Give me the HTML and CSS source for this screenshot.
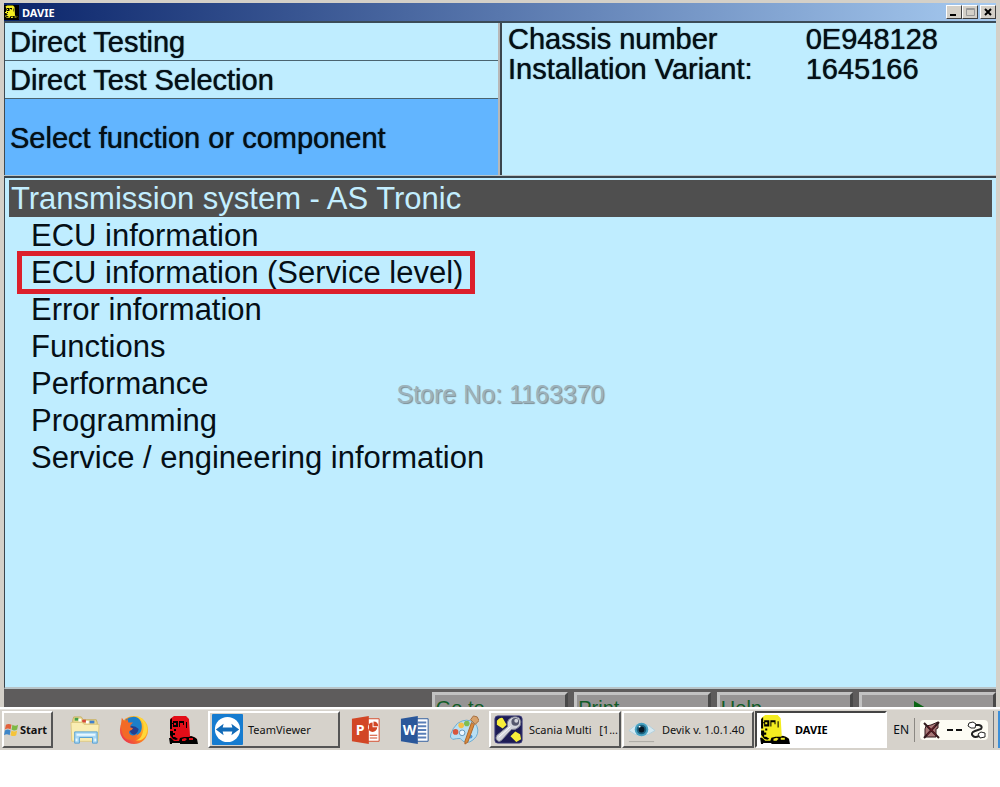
FILE: index.html
```html
<!DOCTYPE html>
<html lang="en">
<head>
    <meta charset="UTF-8">
    <meta name="viewport" content="width=device-width, initial-scale=1.0">
    <title>DAVIE</title>
    <link rel="stylesheet" href="styles.css">
</head>
<body>
    <!-- Truck icon, shared by the title bar and the taskbar -->
    <svg class="defs" aria-hidden="true">
        <symbol id="truck" viewBox="0 0 30 30">
            <path fill="currentColor" d="M2 4l4-3h12l3 3 1 17 6 2 1 5H3l-1-6z"/>
            <path fill="#000" d="M2 5l2-2v5h1V6h5v6H5V9H4v5H2zM11 6h5v4h-1V8h-3v4h-1zM18 7h1v6h-1zM2 16h3v2h2v2H5v2h2l3 2-2 1-3-1-3-4zM6 14h2v2H6zM1 23h2l3 3h5l1-3 4-1h5l2-1 3 1 3 2 1 5H12v-1H4v1H2z"/>
            <path fill="currentColor" d="M6 8h2v2H6zM14 24l3-1 2 1-2 2h-3zM21 23h4v2h-4z"/>
        </symbol>
    </svg>

    <main class="window">
        <header class="title-bar">
            <svg class="title-icon"><use href="#truck"/></svg>
            <h1>DAVIE</h1>
            <div class="window-buttons">
                <button aria-label="Minimize"><svg viewBox="0 0 12 10"><path d="M2 7h6v2H2z"/></svg></button>
                <button aria-label="Maximize" disabled><svg viewBox="0 0 12 10"><path fill="none" stroke="#999" d="M2.500 1.500h8v7h-8zM2 2.500h9"/></svg></button>
                <button class="close" aria-label="Close"><svg viewBox="0 0 12 10"><path fill="none" stroke="#000" stroke-width="2" d="M3 2l6 6M9 2L3 8"/></svg></button>
            </div>
        </header>

        <section class="info">
            <div class="steps">
                <p>Direct Testing</p>
                <p>Direct Test Selection</p>
                <p class="current">Select function or component</p>
            </div>
            <dl class="vehicle">
                <dt>Chassis number</dt>
                <dd>0E948128</dd>
                <dt>Installation Variant:</dt>
                <dd>1645166</dd>
            </dl>
        </section>

        <section class="selection">
            <h2>Transmission system - AS Tronic</h2>
            <ul>
                <li><a href="#">ECU information</a></li>
                <li><a href="#" class="marked">ECU information (Service level)</a></li>
                <li><a href="#">Error information</a></li>
                <li><a href="#">Functions</a></li>
                <li><a href="#">Performance</a></li>
                <li><a href="#">Programming</a></li>
                <li><a href="#">Service / engineering information</a></li>
            </ul>
            <p class="watermark">Store No: 1163370</p>
        </section>

        <div class="function-keys">
            <button class="first">Go to</button>
            <button>Print</button>
            <button>Help</button>
            <button class="next" aria-label="Next"><svg viewBox="0 0 14 16"><path fill="#0a6414" d="M1 1l12 7-12 7z"/></svg></button>
        </div>
    </main>

    <footer class="taskbar">
        <button class="start">
            <svg viewBox="0 0 16 16">
                <path fill="#e2603a" d="M2 3q3-2 6 0L7 8Q4 6 1 8z"/>
                <path fill="#7db844" d="M9 3q3 2 6 0l-1 5q-3 2-6 0z"/>
                <path fill="#3f86c8" d="M1 9q3-2 6 0l-1 5q-3-2-6 0z"/>
                <path fill="#f5c43a" d="M8 9q3 2 6 0l-1 5q-3 2-6 0z"/>
            </svg>
            Start
        </button>
        <div class="launchers">
            <button aria-label="Explorer">
                <svg viewBox="0 0 32 32">
                    <path fill="#e9d78b" stroke="#c9b265" d="M3 5l1-3h8l2 3h14l1 3v19H2z"/>
                    <path fill="#46a04a" d="M5 3h4v3H5z"/><path fill="#d64a3a" d="M13 5h4v3h-4z"/><path fill="#3f80cd" d="M21 6h5v3h-5z"/>
                    <path fill="#fff" d="M9 4h3v3H9zM17 6h3v3h-3z"/>
                    <path fill="#faedb2" stroke="#dec982" d="M1 8h12l2 2h16l-1 18H2z"/>
                    <path fill="#a9d8f4" stroke="#559fd2" d="M5 30V18h24v12h-5v-6H10v6z"/>
                    <path fill="none" stroke="#e8f8ff" stroke-width="2" d="M7 21h20M7 25v3M27 25v3"/>
                </svg>
            </button>
            <button aria-label="Firefox">
                <svg viewBox="0 0 32 32">
                    <defs>
                        <linearGradient id="flame" x1="1" y1="0" x2="0" y2="1"><stop offset="0" stop-color="#ffe63b"/><stop offset=".5" stop-color="#ff8a1c"/><stop offset="1" stop-color="#e3195b"/></linearGradient>
                    </defs>
                    <circle cx="16" cy="16" r="15" fill="url(#flame)"/>
                    <path fill="#1c7fc9" d="M7 5q5-4 11-3 5 2 6 7 1 6-1 9-4 5-9 4-5-2-5-7z"/>
                    <path fill="#253f8e" d="M12 12q5-1 9 3-1 5-5 6-6-1-4-9z"/>
                    <path fill="#f26a26" d="M2 11l1-8 3 4q2-1 3-3l1 4 5 0q-3 2-3 5l3 1q-1 2-4 3-1 4 3 5 3 0 5-2 1 4-4 6-8 2-11-5z"/>
                    <path fill="#ffd83a" d="M18 1q6 3 8 8 1 7-2 13-2 4-6 5 8 1 11-6 3-7-2-14-3-5-9-6z"/>
                </svg>
            </button>
            <button class="truck-red" aria-label="Truck tool"><svg><use href="#truck"/></svg></button>
        </div>
        <button class="task">
            <svg viewBox="0 0 32 32">
                <rect x="0" y="0" width="32" height="32" rx="1" fill="#167cd0"/>
                <circle cx="16" cy="16" r="13" fill="#fff"/>
                <path fill="#126bb8" d="M4 16l8-6-1 4h10l-1-4 8 6-8 6 1-4H11l1 4z"/>
            </svg>
            <span>TeamViewer</span>
        </button>
        <div class="launchers office">
            <button aria-label="PowerPoint">
                <svg viewBox="0 0 32 32">
                    <path fill="#fff" stroke="#d24625" stroke-width="1" d="M16 4h14v24H16z"/>
                    <path fill="#d24625" d="M23 8a5 5 0 1 0 5 5h-5zM24 7v5h5q0-5-5-5zM20 21h8v1h-8zM20 24h8v1h-8zM1 4L19 1v30L1 28z"/>
                    <text x="5" y="21" class="glyph">P</text>
                </svg>
            </button>
            <button aria-label="Word">
                <svg viewBox="0 0 32 32">
                    <path fill="#fff" stroke="#2a579a" d="M16 4h14v24H16z"/>
                    <path stroke="#5a7fb8" stroke-width="2" d="M19 8h9M19 12h9M19 16h9M19 20h9M19 24h9"/>
                    <path fill="#2a579a" d="M1 4L19 1v30L1 28z"/>
                    <text x="3" y="21" class="glyph">W</text>
                </svg>
            </button>
            <button aria-label="Paint">
                <svg viewBox="0 0 32 32">
                    <path fill="#b9dff3" stroke="#68a9d0" d="M9 9Q19 2 28 9q5 7 1 14-7 9-14 5-2-2-3-3-4 0-8 1-4-2-2-6 2-6 7-11z"/>
                    <circle cx="13" cy="11" r="3" fill="#f3bf48"/><circle cx="19" cy="9" r="3" fill="#7dbd52"/><circle cx="7" cy="18" r="3" fill="#d8563c"/>
                    <circle cx="14" cy="19" r="3" fill="#eef8ff" stroke="#5e92b8"/><circle cx="23" cy="23" r="2" fill="#4c92d0"/>
                    <path fill="#d98a3d" stroke="#aa6228" d="M24 8l3 2-7 19-3 2v-3z"/>
                    <path fill="#d7a26c" stroke="#a46b3b" d="M23 5l3-4 4 1 2 4-4 4z"/>
                </svg>
            </button>
        </div>
        <button class="task">
            <svg viewBox="0 0 32 32">
                <rect x="2" y="2" width="28" height="28" rx="3" fill="#1d1c55" stroke="#3c3b78"/>
                <path fill="#f8ee3a" d="M4 7q3-4 6-3l4 7-4 4-6-4zM18 23l5-5 5 3 1 5-5 3z"/>
                <path fill="#d2d4dc" stroke="#77798a" d="M16 6q5-5 11-2 3 4 1 8-4 5-9 4L9 27q-3 3-5 0-2-2 0-5l11-9q-1-4 1-7z"/>
                <circle cx="23" cy="8" r="4" fill="#55576e"/><circle cx="24" cy="7" r="2" fill="#d2d4dc"/>
                <path stroke="#fff" stroke-width="1" d="M6 24l12-11"/>
            </svg>
            <span>Scania Multi</span>
            <span class="count">[1...</span>
        </button>
        <button class="task">
            <svg viewBox="0 0 32 32">
                <path fill="#aaa7a2" d="M3 28h26v1H3z"/>
                <path fill="#d5e9f1" stroke="#b3cedb" d="M3 17Q16 3 30 17 16 28 3 17z"/>
                <circle cx="16" cy="16" r="7" fill="#48a2c2"/><circle cx="16" cy="16" r="5" fill="#1a607d"/>
                <circle cx="16" cy="16" r="3" fill="#061724"/><circle cx="14" cy="13" r="1" fill="#fff"/>
            </svg>
            <span>Devik v. 1.0.1.40</span>
        </button>
        <button class="task active">
            <svg><use href="#truck"/></svg>
            <span>DAVIE</span>
        </button>
        <div class="tray">
            <span class="language">EN</span>
            <div class="devices">
                <svg viewBox="0 0 68 20" role="img" aria-label="Device connection">
                    <path fill="#a77" stroke="#30191c" d="M6 6l5-1 7-3v6l-2 1v8H5V9z"/>
                    <path fill="none" stroke="#30191c" stroke-width="2" d="M4 3l15 15M19 2L4 18"/>
                    <path fill="none" stroke="#721824" d="M8 6l8 9M15 6l-8 9"/>
                    <path stroke="#111" stroke-width="2" d="M27 10h6M36 10h6"/>
                    <path fill="none" stroke="#222" stroke-width="2" d="M54 5h5q4 1 2 4l-6 2q-5 2-2 5 2 2 6 0"/>
                    <path fill="#fff" stroke="#222" d="M49 3l4-1 3 2-1 4-4 0-3-2zM58 14l3-2 4 1v4l-5 1z"/>
                </svg>
            </div>
            <div class="tray-edge"></div>
        </div>
    </footer>
</body>
</html>
```
FILE: styles.css
```css
* {
    box-sizing: border-box;
}
body {
    margin: 0;
    background-color: #fff;
    font-family: "Liberation Sans", Arial, sans-serif;
    color: #050f16;
    overflow-x: hidden;
}
h1, h2, p, ul, dl, dd {
    margin: 0;
    padding: 0;
    font-weight: normal;
}
button {
    font-family: "Noto Sans", Tahoma, sans-serif;
    font-size: 11px;
    color: #111;
    padding: 0;
    border: none;
    background: none;
}
svg {
    display: block;
    flex: none;
}
.defs {
    display: none;
}

/* Application window */
.window {
    border: solid #d4d0c8;
    border-width: 3px 4px 0 4px;
    background-color: #bfedff;
}
.title-bar {
    display: flex;
    align-items: center;
    gap: 3px;
    height: 18px;
    background: linear-gradient(to right, #0a246a, #a6caf0);
}
.title-icon {
    width: 15px;
    height: 15px;
    background-color: #000;
    color: #f4ed20;
}
.title-bar h1 {
    font: bold 11px "Noto Sans", Tahoma, sans-serif;
    color: #fff;
}
.window-buttons {
    display: flex;
    margin-left: auto;
}
.window-buttons button {
    width: 16px;
    height: 14px;
    background-color: #d4d0c8;
    border: 1px solid;
    border-color: #fff #404040 #404040 #fff;
}
.window-buttons svg {
    width: 12px;
    height: 10px;
    margin: auto;
}
.window-buttons .close {
    margin-left: 2px;
}

.info {
    display: grid;
    grid-template-columns: 1fr 1fr;
    border-top: 2px solid #3b4c58;
    font-size: 29px;
    line-height: 30px;
    text-shadow: 0 0 1px #050f16;
}
.steps {
    display: grid;
    grid-template-rows: 38px 38px 77px;
    border-left: 1px solid #3f4a52;
    border-right: 2px solid #b8b8b8;
}
.steps p {
    padding: 4px 5px;
    border-bottom: 1px solid #4a6470;
    white-space: nowrap;
}
.steps .current {
    display: flex;
    align-items: center;
    background-color: #62b5ff;
    border-bottom: none;
}
.vehicle {
    display: grid;
    grid-template-columns: 61% 1fr;
    align-content: start;
    padding: 1px 0 1px 6px;
    border-left: 2px solid #3b454d;
    white-space: nowrap;
}

.selection {
    position: relative;
    min-height: 513px;
    padding: 2px 4px 0 4px;
    border: solid #3b454d;
    border-width: 2px 0 0 1px;
    border-bottom: 2px solid #b8c4c8;
    box-shadow: 0 -1px #b8c4c8;
    font-size: 31px;
    line-height: 37px;
}
.selection h2 {
    font-size: 31px;
    background-color: #4f4f4f;
    color: #c3eeff;
    padding-left: 2px;
}
.selection ul {
    list-style: none;
    padding-left: 11px;
}
.selection a {
    display: inline-block;
    padding: 0 9px 0 11px;
    color: #050f16;
    text-decoration: none;
    vertical-align: top;
}
.selection .marked {
    outline: 5px solid #dc202c;
    outline-offset: -2px;
}
.watermark {
    position: absolute;
    top: 198px;
    left: 0;
    right: 0;
    text-align: center;
    font-size: 25px;
    color: #9db2bb;
    text-shadow: 1px 1px 1px #7d8e96;
    pointer-events: none;
}

/* Function keys run under the taskbar */
.function-keys {
    display: grid;
    grid-template-columns: repeat(7, 1fr);
    gap: 6px;
    height: 18px;
    padding-top: 3px;
    overflow: hidden;
    background-color: #5e5c5c;
}
.function-keys button {
    height: 32px;
    padding: 0 1px;
    font: 20px "Liberation Sans", Arial, sans-serif;
    color: #125c28;
    text-align: left;
    background-color: #969494;
    border: 3px solid;
    border-color: #c2c2c2 #484848 #484848 #c2c2c2;
}
.function-keys .first {
    grid-column: 4;
}
.function-keys .next svg {
    width: 14px;
    height: 16px;
    margin: 0 0 0 50px;
}

/* Taskbar */
.taskbar {
    display: flex;
    align-items: center;
    height: 43px;
    padding: 0 0 0 2px;
    border-top: 2px solid #fff;
    background-color: #d6d2cb;
    box-shadow: inset 0 1px #e6e3de;
}
.start,
.task {
    display: flex;
    align-items: center;
    height: 37px;
    background-color: #d6d2cb;
    border: 2px solid;
    border-color: #fff #555 #555 #fff;
    white-space: nowrap;
}
.start {
    gap: 1px;
    width: 51px;
    font-weight: bold;
}
.start svg {
    width: 15px;
    height: 15px;
}
.launchers {
    display: flex;
    gap: 19px;
    padding: 0 10px 0 17px;
}
.launchers svg {
    width: 30px;
    height: 30px;
}
.launchers.office {
    padding: 0 10px;
}
.truck-red {
    color: #e30d18;
}
.glyph {
    font: bold 15px "Open Sans", sans-serif;
    fill: #fff;
}
.task {
    flex: 0 1 132px;
    gap: 5px;
    padding: 0 1px 0 2px;
    margin-right: 1px;
    min-width: 0;
    overflow: hidden;
}
.task svg {
    width: 31px;
    height: 31px;
}
.task .count {
    margin-left: auto;
}
.task.active {
    font-weight: bold;
    color: #000;
    background-color: #fff;
    border-color: #444 #fff #fff #444;
}
.task.active svg {
    color: #f4ed20;
}
.tray {
    display: flex;
    align-items: center;
    margin-left: auto;
    gap: 5px;
}
.language {
    font: 12px "Noto Sans", Tahoma, sans-serif;
}
.devices {
    border-left: 1px solid #8b8883;
    padding: 2px 0 2px 5px;
}
.devices svg {
    width: 68px;
    height: 20px;
    border-radius: 4px;
    background-color: #fdfcf4;
}
.tray-edge {
    width: 7px;
    height: 37px;
    border-left: 1px solid #77797c;
    border-right: 2px solid #3d8fd8;
}
```
